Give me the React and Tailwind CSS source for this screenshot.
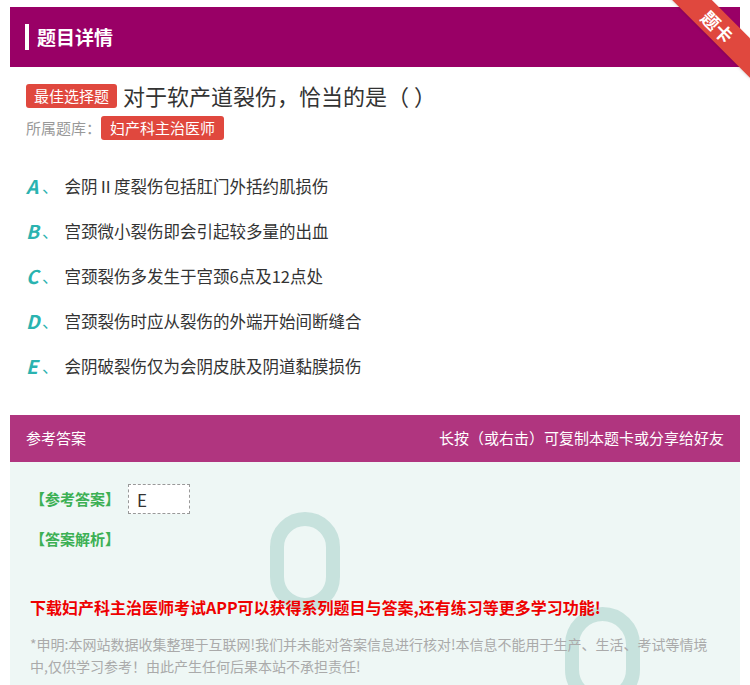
export default function App() {
  const opts = [
    ["A", "会阴Ⅱ度裂伤包括肛门外括约肌损伤"],
    ["B", "宫颈微小裂伤即会引起较多量的出血"],
    ["C", "宫颈裂伤多发生于宫颈6点及12点处"],
    ["D", "宫颈裂伤时应从裂伤的外端开始间断缝合"],
    ["E", "会阴破裂伤仅为会阴皮肤及阴道黏膜损伤"],
  ];
  return (
    <div className="relative w-[750px] h-[685px] overflow-hidden bg-white" style={{ fontFamily: '"Noto Sans CJK SC", "Noto Sans", sans-serif' }}>
      <div className="mx-[10px] mt-[7px] h-[60px] bg-[#990066] flex items-center pl-[15px]">
        <div className="w-[4px] h-[26px] bg-white mr-[8px]" />
        <span className="text-white text-[19px] font-bold">题目详情</span>
      </div>
      <div className="absolute right-[-28px] top-[12px] w-[120px] h-[28px] bg-[#e0483e] rotate-45 flex items-center justify-center text-white text-[18px] font-bold shadow">题卡</div>
      <div className="px-[26px] pt-[12px]">
        <div className="flex items-center gap-[6px]">
          <span className="bg-[#e0483e] text-white text-[15px] px-[8px] h-[24px] leading-[24px] rounded-[3px]">最佳选择题</span>
          <span className="text-[22px] text-[#333]">对于软产道裂伤，恰当的是（ ）</span>
        </div>
        <div className="flex items-center mt-[4px]">
          <span className="text-[15px] text-[#999]">所属题库：</span>
          <span className="bg-[#e0483e] text-white text-[15px] px-[9px] h-[24px] leading-[24px] rounded-[3px]">妇产科主治医师</span>
        </div>
        <div className="mt-[34px] flex flex-col gap-[21px]">
          {opts.map(([l, t]) => (
            <div key={l} className="flex items-center h-[24px] text-[16.5px] text-[#333]">
              <span className="text-[#2ab3b0] italic font-bold text-[19px] w-[16px]">{l}</span>
              <span className="text-[#2ab3b0] mr-[6px]">、</span>
              <span>{t}</span>
            </div>
          ))}
        </div>
      </div>
      <div className="absolute left-[10px] right-[10px] top-[415px] h-[270px]">
        <div className="h-[47px] bg-[#b0357f] flex items-center justify-between px-[16px] text-white text-[15px]">
          <span>参考答案</span>
          <span>长按（或右击）可复制本题卡或分享给好友</span>
        </div>
        <div className="bg-[#eef7f5] h-[223px] px-[20px] pt-[22px] relative overflow-hidden">
          <div className="absolute left-[260px] top-[50px] w-[70px] h-[100px] rounded-full border-[14px] border-[#b7d9d3] opacity-70" />
          <div className="absolute left-[555px] top-[145px] w-[75px] h-[100px] rounded-full border-[14px] border-[#b7d9d3] opacity-70" />
          <div className="relative flex items-center gap-[8px]">
            <span className="text-[#3cb054] font-bold text-[15px]">【参考答案】</span>
            <span className="bg-white border border-dashed border-[#999] px-[8px] text-[17px] text-[#333] h-[30px] leading-[30px] w-[62px]">E</span>
          </div>
          <div className="relative text-[#3cb054] font-bold text-[15px] mt-[14px]">【答案解析】</div>
          <div className="relative text-[#ee0000] font-bold text-[16px] mt-[44px]">下载妇产科主治医师考试APP可以获得系列题目与答案,还有练习等更多学习功能!</div>
          <div className="relative text-[#aaa] text-[14px] leading-[22px] mt-[14px]">*申明:本网站数据收集整理于互联网!我们并未能对答案信息进行核对!本信息不能用于生产、生活、考试等情境中,仅供学习参考！由此产生任何后果本站不承担责任!</div>
        </div>
      </div>
    </div>
  );
}
